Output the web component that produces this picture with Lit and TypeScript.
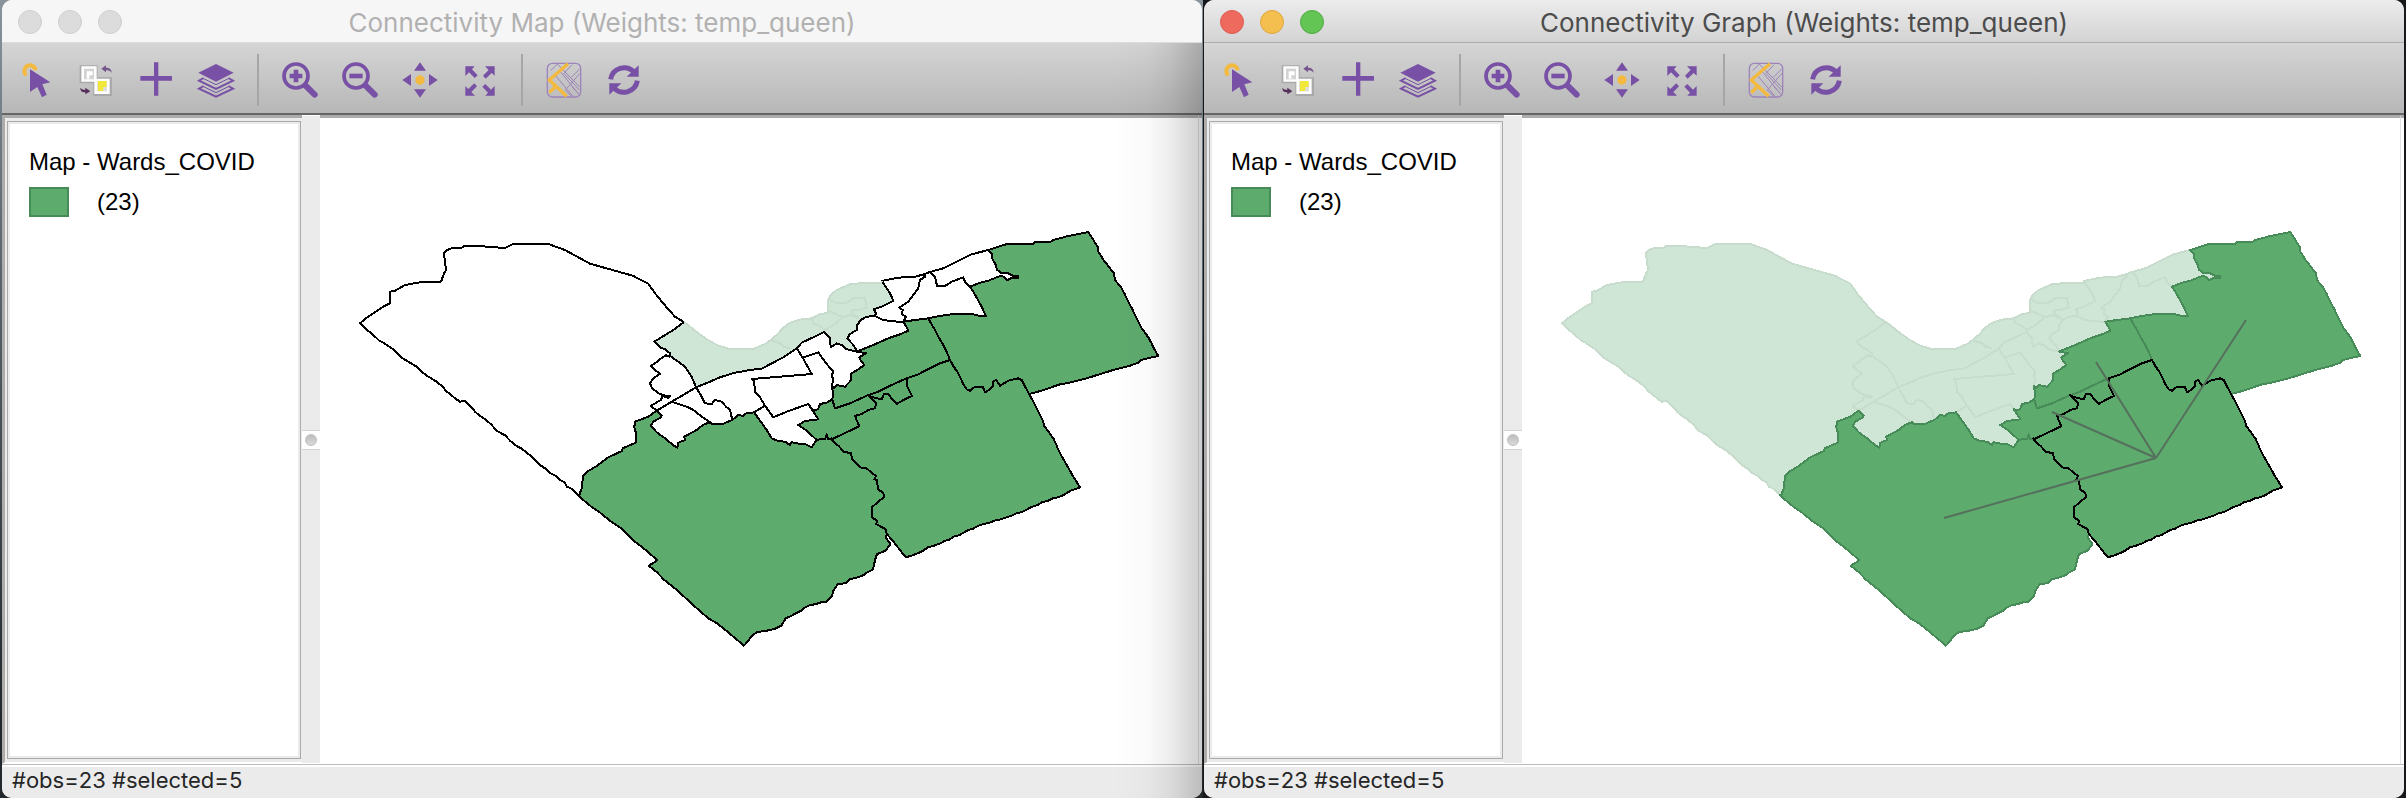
import { LitElement, html, svg, css } from "lit";
import { customElement, property } from "lit/decorators.js";
import { classMap } from "lit/directives/class-map.js";

/* ---------- ward geometry ---------- */

type Point = [number, number];
type Arc = Point[];

/** Builds a reader for one digitising sheet: origin on the map plus units per pixel. */
const sheet = (ox: number, oy: number, sx = 3, sy = 3) => (text: string): Arc =>
  text.trim().split(/\s+/).map((pair) => {
    const [x, y] = pair.split(",").map(Number);
    return [ox + x / sx, oy + y / sy] as Point;
  });

const west = sheet(340, 220);
const core = sheet(620, 260);
const east = sheet(800, 220);
const south = sheet(560, 400, 2.8, 3);

/** Adds small steps along an arc so that boundaries look surveyed, not ruled. */
const rough = (arc: Arc): Arc => {
  const out: Arc = [arc[0]];
  for (let i = 1; i < arc.length; i++) {
    const [x0, y0] = arc[i - 1];
    const [x1, y1] = arc[i];
    const n = Math.floor(Math.hypot(x1 - x0, y1 - y0) / 5);
    for (let k = 1; k < n; k++) {
      const w = (k % 2 ? 0.3 : -0.3);
      out.push([x0 + ((x1 - x0) * k) / n + w, y0 + ((y1 - y0) * k) / n + w]);
    }
    out.push([x1, y1]);
  }
  return out;
};

const back = (arc: Arc): Arc => [...arc].reverse();
const path = (arcs: Arc[], close = false) =>
  "M" + arcs.flat().map(([x, y]) => `${x.toFixed(1)} ${y.toFixed(1)}`).join("L") + (close ? "Z" : "");

const westShore = west(`715,825 695,806 680,800 675,788 660,780 648,768 632,760 615,745 600,735 585,720
  570,706 545,686 530,678 512,664 495,646 470,632 455,615 435,597 420,588 405,575 395,562 375,542 360,545
  345,535 330,522 318,513 308,500 290,485 262,468 245,455 230,440 210,428 185,413 160,388 130,368 118,362
  100,345 75,325 60,310 80,293 100,280 130,260 150,250 150,215 165,212 195,195 245,186 300,185 305,180
  312,160 318,150 312,100 322,90 340,83 365,83 373,77 415,78 495,84 520,72 625,72 675,90 750,131 878,167
  925,191 945,220 985,268 1005,290 1032,306`);
const kanataTop = west("1032,306 1000,330 943,365 960,382 975,388 990,400");
const kanataWest = west(`990,400 988,410 978,406 960,418 945,430 932,437 945,450 960,461 940,475 930,490
  935,503 955,520 970,526 990,528 985,534 968,528 962,540 932,558 950,572`);
const westSouth = west(`950,572 925,590 885,605 883,622 888,640 887,668 848,685 846,693 805,712 770,738
  740,756 728,768 727,800 718,825 715,825`);
const riverWest = core(`192,186 225,212 260,238 290,255 330,268 400,267 440,250 470,225 490,203 510,188
  545,178 575,175 600,163 625,158 625,120 632,105 650,90 690,73 720,70 775,70 788,66`);
const riverEast = east("245,183 295,173 345,170 372,163 390,156 430,145 480,120 515,103 545,95 565,90");
const eastTop = east("565,90 595,80 625,71 700,72 705,66 750,66 760,60 805,48 865,36");
const eastSide = rough(east(`865,36 893,80 893,92 912,122 942,160 945,180 965,205 985,245 1005,285
  1025,325 1045,352 1070,400 1075,408`));
const eastBottom = east("1075,408 1055,412 1022,420 1015,428 990,437 940,450 860,475 800,490 780,493 725,512 687,522");
const osgoodeEast = [
  ...rough(east("687,522 705,555 730,605 733,618 760,655 780,700 800,735 825,778")),
  ...rough(south("1440,235 1456,262")),
];
const osgoodeSouth = rough(south(`1456,262 1430,272 1410,285 1350,307 1305,330 1250,352 1170,378 1130,398
  1065,430 1030,442 1005,458 968,472`));
const osgoodeWest = south(`968,472 930,420 915,402 912,388 885,372 888,362 873,352 873,322 908,290 905,278
  890,268 888,240 880,238 885,228 875,220 858,205 840,202 818,178 815,160 795,155 780,138 765,125 760,115`);
const rideauSouth = rough(south(`52,288 90,322 110,336 140,362 175,388 210,425 240,450 272,480 248,497 270,515
  290,538 325,568 375,617 415,655 440,670 480,705 515,737 535,710 550,697 570,693 600,687 620,677 632,655
  660,640 700,615 745,605 762,588 765,572 778,552 800,550 812,538 835,532 875,510 882,480 888,462 912,452
  925,432 912,412 915,402`));
const rideauNorth = core(`110,452 125,466 123,472 100,485 92,497 110,517 135,535 160,556 172,563 175,548
  195,540 193,530 230,510 250,494 270,487 275,491 310,491 337,480 355,465 370,468 375,461 402,457`);
const knoxSouth = core(`402,457 415,475 440,510 455,535 475,543 495,545 510,555 515,547 540,552 555,552 575,562
  583,550 590,540`);
const notch = core("590,540 600,538 616,537 620,523 624,537 635,538");
const knoxEast = core("590,540 560,512 535,495 555,483 595,478 575,447");
const gloucesterTop = core("575,447 582,452 595,447 600,432 620,428 637,418");
const stripWest = core("637,418 641,432 645,445");
const stripSouthA = core("645,445 690,430 745,405");
const stripSouthB = core("745,405 775,395 800,382 830,368 860,355");
const stripSouthC = east("320,475 355,463 385,447 420,430 450,420");
const gloucesterEast = core("635,538 690,512 718,498 712,485 705,468 725,462 745,450 765,445 768,430 750,410 745,405");
const gloucesterArm = core(`745,405 758,412 785,418 792,402 805,402 820,422 830,432 850,420 876,408 868,392
  862,380 862,355`);
const cumberlandSouth = east(`450,420 460,438 475,460 490,492 500,508 510,512 525,500 548,500 555,517 570,508
  578,500 578,485 588,480 600,497 625,482 655,475 665,480 687,522`);
const stripEast = rough(east("450,420 435,385 410,340 385,295"));
const orleansSouth = east("385,295 420,288 460,282 515,282 540,288 558,289 545,260 520,215 510,200");
const orleansEast = east(`510,200 535,190 565,182 600,168 612,170 622,180 635,174 655,174 655,168 640,168
  625,160 605,160 592,150 586,132 576,115 575,100 565,90`);
const stripNorth = east("385,295 345,300 310,305 318,318 325,332 300,343 265,355 220,375 175,393");
const stripNorthWest = core(`712,275 738,280 718,292 722,302 733,315 715,328 692,342 692,362 675,380
  650,375 642,383 635,378 640,400 637,418`);
const paleWest = core("150,287 195,320 215,350 228,382");
const paleSouth = core(`228,382 270,365 300,352 345,338 390,330 425,326 490,292 530,265 545,248 580,232
  612,216 630,235 632,262 650,250 665,255 680,268 712,275`);
const paleEast = core("712,275 700,255 682,235 690,222 710,210 712,195 722,180 740,170 765,168 768,160 762,148 790,138 820,122 810,100 788,66");

const cityLimit = path([westShore, riverWest, riverEast, eastTop, eastSide, eastBottom, osgoodeEast, osgoodeSouth,
  osgoodeWest.slice(0, 3), back(rideauSouth)], true);
const pale = path([riverWest, back(paleEast), back(paleSouth), back(paleWest), back(kanataTop)], true);

const rideau = path([rideauSouth, osgoodeWest.slice(3), back(notch), back(knoxSouth), back(rideauNorth), westSouth], true);
const osgoode = path([osgoodeWest, gloucesterEast, gloucesterArm, stripSouthC, cumberlandSouth, osgoodeEast, osgoodeSouth], true);
const cumberland = path([eastTop, eastSide, eastBottom, back(cumberlandSouth), stripEast, orleansSouth, orleansEast], true);
const strip = path([stripNorth, stripNorthWest, stripWest, stripSouthA, stripSouthB, stripSouthC, stripEast], true);
const gloucester = path([knoxEast, gloucesterTop, stripWest, stripSouthA, stripSouthB, back(gloucesterArm),
  back(gloucesterEast), back(notch)], true);
const selectedWards = [rideau, cumberland, gloucester, strip, osgoode];

const urbanLines = [
  kanataTop, kanataWest, paleWest, paleSouth, paleEast,
  core("228,382 190,405 155,425 110,452"),
  core("228,382 242,405 255,430 275,432 285,420 305,425 318,440 330,450 337,480"),
  core("155,425 170,430 200,440 220,450 245,470 270,487"),
  core("530,265 548,293 575,342 395,357 402,362 405,395 420,412 432,432 435,437 402,457"),
  core("548,293 595,277 605,292 620,312 640,335 635,345 640,360 635,378"),
  core("435,437 460,472 500,455 565,432 575,447"),
  core("765,168 790,180 820,184 850,186"),
  east("310,305 318,290 305,282 308,270 298,263 325,245 355,205 360,180 375,170 372,163"),
  east("390,156 405,170 408,185 412,198 435,198 455,185 490,172 495,185 510,200"),
];
const innerLines = [
  core("450,240 480,250 490,260 510,265"),
  core("575,175 580,190 600,198 615,210 615,216"),
  core("625,152 670,172 690,165 722,178"),
  core("630,120 650,130 675,130 690,122 700,113 735,115 740,142 715,150 698,150 695,160 715,170"),
  core("612,212 640,195 665,175"),
];

/** Centroids joined in the connectivity graph. */
const hub: Point = [954, 458];
const neighbours: Point[] = [[742, 518], [850, 412], [894, 362], [1044, 320]];

/* ---------- icons ---------- */

const P = "#7850a5";
const Y = "#f4b93f";
const arrow = svg`<path d="M10 13H38L30 22L47 40L38 48L21 31L10 42Z" fill=${P}/>`;
const sweep = svg`<path d="M14 52A41 41 0 0 1 84 30" fill="none" stroke=${P} stroke-width="15"/>
  <path d="M98 10V44H62Z" fill=${P}/>`;
const icons = {
  select: svg`<path d="M25 40A17 17 0 1 1 53 25" fill="none" stroke=${Y} stroke-width="12"/>
    <path d="M36 22L97 61L73 67L86 98L72 106L58 75L36 90Z" fill=${P}/>`,
  invert: svg`<path d="M5 10h54v54H5zM46 46h56v56H46z" fill="#a9a9a9"/>
    <path d="M10 13h46v46H10zM49 50h46v46H49z" fill="#fdfdfd"/>
    <path d="M18 20h30v32H18z" fill="#d2d2d4"/><path d="M26 28h18v12H34v10h-8z" fill="#fff"/>
    <path d="M57 58h30v30H57z" fill="#dededf"/><path d="M60 57h26v18H76v12H60z" fill="#f2e83a"/>
    <path d="M70 20l14-10v7c12 0 17 6 17 16c-4-7-9-9-17-8v6z" fill="#76568f"/>
    <path d="M37 88L22 97v-6c-11 0-15-5-15-14c4 5 8 6 15 6v-6z" fill="#55305a"/>`,
  add: svg`<path d="M48 1h13v41h41v14H61v45H48V56H7V42h41z" fill=${P}/>`,
  layers: svg`<path d="M54 6L107 32L54 59L1 32Z" fill=${P}/>
    <path d="M17 48L3 56L54 81L105 56L91 48M17 72L3 80L54 104L105 80L91 72" fill="none" stroke=${P} stroke-width="6"/>
    <path d="M17 50L54 68L91 50M17 74L54 92L91 74" fill="none" stroke=${P} stroke-width="3"/>`,
  zoomIn: svg`<circle cx="42" cy="42" r="36" fill="none" stroke=${P} stroke-width="11"/>
    <path d="M70 70L98 98" stroke=${P} stroke-width="18" stroke-linecap="round"/>
    <path d="M42 23V61M23 42H61" stroke=${P} stroke-width="14"/>`,
  zoomOut: svg`<circle cx="42" cy="42" r="36" fill="none" stroke=${P} stroke-width="11"/>
    <path d="M70 70L98 98" stroke=${P} stroke-width="18" stroke-linecap="round"/>
    <path d="M22 42H62" stroke=${P} stroke-width="14"/>`,
  pan: svg`<circle cx="54" cy="54" r="14" fill=${Y}/>
    <path d="M54 1L72 26H36ZM54 107L36 82H72ZM1 54L27 36V72ZM107 54L81 72V36Z" fill=${P}/>`,
  extent: svg`<g>${arrow}</g><g transform="rotate(90 54 57)">${arrow}</g><g transform="rotate(180 54 57)">${arrow}</g>
    <g transform="rotate(270 54 57)">${arrow}</g>`,
  basemap: svg`<rect x="4" y="4" width="100" height="101" rx="15" fill="none" stroke="#9d84ba" stroke-width="4"/>
    <path d="M34 6L102 76M78 8L54 34L100 84M102 20L76 46M102 34L58 84L76 102M34 6L14 26M28 40L80 102M44 30L96 94M78 74L102 100"
      fill="none" stroke="#9d84ba" stroke-width="3"/>
    <path d="M66 5L10 54L62 103M10 92L30 72" fill="none" stroke=${Y} stroke-width="10"/>`,
  refresh: svg`<g>${sweep}</g><g transform="rotate(180 54 54)">${sweep}</g>`,
};

const toolGroups: [keyof typeof icons, string][][] = [
  [["select", "Select"], ["invert", "Invert selection"], ["add", "Add layer"], ["layers", "Map layers"]],
  [["zoomIn", "Zoom in"], ["zoomOut", "Zoom out"], ["pan", "Pan"], ["extent", "Full extent"]],
  [["basemap", "Base map"], ["refresh", "Refresh"]],
];

/* ---------- ward map ---------- */

@customElement("ward-map")
export class WardMap extends LitElement {
  @property() mode: "map" | "graph" = "map";

  static styles = css`
    :host { display: block; min-width: 0; min-height: 0; overflow: hidden; }
    svg { display: block; width: 100%; height: 100%; }
    path { stroke-linejoin: round; stroke-width: 2; shape-rendering: crispEdges; }
    .white { fill: #fff; stroke: #000; }
    .pale { fill: #cfe6d6; stroke: #c8dccd; }
    .clear { fill: none; stroke: #fff; }
    .paleline { fill: none; stroke: #c8dccd; }
    .line { fill: none; stroke: #000; }
    .ward { fill: #5eab6e; stroke: #000; }
    .soft { stroke: #478c58; }
    .focus { fill: none; stroke: #000; }
    .link { stroke: #55705c; stroke-width: 2; }
  `;

  render() {
    const graph = this.mode === "graph";
    return html`<svg viewBox="320 118 878 646" preserveAspectRatio="xMinYMin meet" role="img" aria-label="Ward map">
      ${graph
        ? svg`<path class="pale" d=${cityLimit} />
            ${urbanLines.map((a) => svg`<path class="paleline" d=${path([a])} />`)}
            ${innerLines.map((a) => svg`<path class="paleline" d=${path([a])} />`)}
            ${selectedWards.map((d) => svg`<path class="ward soft" d=${d} />`)}
            <path class="focus" d=${osgoode} />
            ${neighbours.map(([x, y]) => svg`<line class="link" x1=${hub[0]} y1=${hub[1]} x2=${x} y2=${y} />`)}`
        : svg`<path class="white" d=${cityLimit} />
            <path class="clear" d=${path([riverWest])} />
            <path class="pale" d=${pale} />
            ${innerLines.map((a) => svg`<path class="paleline" d=${path([a])} />`)}
            ${selectedWards.map((d) => svg`<path class="ward" d=${d} />`)}
            ${urbanLines.map((a) => svg`<path class="line" d=${path([a])} />`)}`}
    </svg>`;
  }
}

/* ---------- window ---------- */

@customElement("map-window")
export class MapWindow extends LitElement {
  @property() heading = "";
  @property() mode: "map" | "graph" = "map";
  @property({ type: Boolean }) active = false;

  static styles = css`
    :host { display: block; min-width: 0; }
    * { box-sizing: border-box; }
    .window { position: relative; display: flex; flex-direction: column; height: 100%; overflow: hidden;
      border-radius: 10px; background: #ebebeb; }
    button { appearance: none; border: 0; padding: 0; margin: 0; background: none; }
    .title { display: grid; grid-template-columns: 1fr auto 1fr; align-items: center; height: 43px; flex: none;
      padding: 2px 16px 0; background: #f6f6f6; border-bottom: 1px solid #dcdcdc; color: #b1b1b1; }
    .active .title { background: linear-gradient(#ececec, #d3d3d3); border-color: #adadad; color: #4c4c4c; }
    h1 { margin: 0; padding-top: 2px; font: 400 26px/32px Inter, sans-serif; white-space: nowrap; }
    .lights { display: flex; gap: 16px; }
    .light { width: 24px; height: 24px; border-radius: 50%; background: #dcdcdc; border: 1px solid #cecece; }
    .active .close { background: #ee6a5f; border-color: #dc5b50; }
    .active .min { background: #f5bf4f; border-color: #dea63c; }
    .active .max { background: #62c554; border-color: #50a843; }
    .tools { display: flex; align-items: center; height: 72px; flex: none; padding: 3px 4px 0;
      background: linear-gradient(#d5d5d5, #b7b7b7); border-bottom: 2px solid #666; }
    .rule { width: 2px; height: 52px; margin: 0 11px; background: #a6a6a6; }
    .tool { display: grid; place-items: center; width: 60px; height: 52px; }
    .tool svg { width: 36px; height: 36px; overflow: visible; }
    .body { display: flex; flex: 1; min-height: 0; background: #fff; }
    .side { display: flex; width: 300px; flex: none; padding: 3px 1px 3px 2px; background: #ebebeb;
      border-left: 3px solid #aeacab; border-top: 3px solid #ababab; border-bottom: 2px solid #fff; }
    .legend { flex: 1; padding: 24px 21px; background: #fff; border: 1px solid #aaa; outline: 2px solid #ebebeb;
      outline-offset: -3px; color: #000; font: 400 24px/32px "Liberation Sans", Arial, sans-serif; }
    h2 { margin: 0; font: inherit; white-space: nowrap; }
    .item { display: flex; align-items: center; gap: 28px; margin-top: 8px; }
    .swatch { width: 40px; height: 30px; background: #5eab6e; border: 2px solid #478c58; }
    .split { display: flex; flex-direction: column; justify-content: center; width: 18px; flex: none;
      margin: 1px 0; background: #ebebeb; }
    .grip { display: grid; place-items: center; height: 20px; background: #fff; border: solid #d2d2d2;
      border-width: 1px 0; }
    .knob { width: 12px; height: 12px; border-radius: 50%; background: linear-gradient(#bdbdbd, #dadada);
      border: 1px solid #c0c0c0; }
    ward-map { flex: 1; border-top: 3px solid #ababab; }
    .edge { flex: none; width: 4px; border-left: 1px solid #e2e2e2; border-top: 3px solid #ababab; }
    .status { flex: none; height: 34px; padding: 0 10px; border-top: 1px solid #bdbdbd;
      box-shadow: inset 0 2px #fff; background: #ebebeb; color: #262626; font: 400 22px/30px Inter, sans-serif; }
    .shade { position: absolute; top: 43px; right: 0; bottom: 0; width: 90px; pointer-events: none;
      background: linear-gradient(90deg, transparent, rgba(0, 0, 0, 0.02) 40%, rgba(0, 0, 0, 0.07) 65%,
      rgba(0, 0, 0, 0.14) 84%, rgba(0, 0, 0, 0.2)); }
  `;

  render() {
    return html`<section class=${classMap({ window: true, active: this.active })}>
      <header class="title">
        <div class="lights">
          <button class="light close" aria-label="Close"></button>
          <button class="light min" aria-label="Minimize"></button>
          <button class="light max" aria-label="Zoom window"></button>
        </div>
        <h1>${this.heading}</h1>
      </header>
      <nav class="tools" aria-label="Map tools">
        ${toolGroups.map((group, i) => html`${i ? html`<span class="rule"></span>` : ""}
          ${group.map(([icon, label]) => html`<button class="tool" aria-label=${label}>
            <svg viewBox="0 0 108 108" aria-hidden="true">${icons[icon]}</svg></button>`)}`)}
      </nav>
      <div class="body">
        <aside class="side">
          <div class="legend">
            <h2>Map - Wards_COVID</h2>
            <div class="item"><span class="swatch"></span><span>(23)</span></div>
          </div>
        </aside>
        <div class="split"><div class="grip"><span class="knob"></span></div></div>
        <ward-map mode=${this.mode}></ward-map>
        <div class="edge"></div>
      </div>
      <footer class="status">#obs=23 #selected=5</footer>
      ${this.active ? "" : html`<div class="shade"></div>`}
    </section>`;
  }
}

@customElement("app-root")
export class AppRoot extends LitElement {
  static styles = css`
    :host { display: grid; grid-template-columns: 1fr 1fr; gap: 2px; padding: 0 2px; height: 100vh;
      box-sizing: border-box; background: linear-gradient(90deg, transparent 50%, #16181b 50%),
      linear-gradient(#88939b, #5d6a72 30%, #22282c 90%); }
  `;

  render() {
    return html`
      <map-window heading="Connectivity Map (Weights: temp_queen)" mode="map"></map-window>
      <map-window heading="Connectivity Graph (Weights: temp_queen)" mode="graph" active></map-window>
    `;
  }
}
